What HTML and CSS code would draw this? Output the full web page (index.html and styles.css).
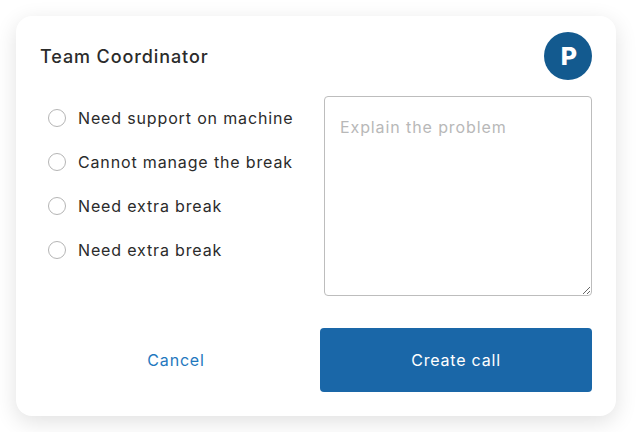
FILE: index.html
```html
<!DOCTYPE html>
<html lang="en">
<head>
    <meta charset="UTF-8">
    <meta name="viewport" content="width=device-width, initial-scale=1.0">
    <title>Team Coordinator</title>
    <link rel="stylesheet" href="styles.css">
</head>
<body>
    <div class="card">
        <div class="card-header">
            <h2>Team Coordinator</h2>
            <div class="avatar">P</div>
        </div>
        <div class="card-body">
            <div class="options">
                <label class="option"><input type="radio" name="reason"> Need support on machine</label>
                <label class="option"><input type="radio" name="reason"> Cannot manage the break</label>
                <label class="option"><input type="radio" name="reason"> Need extra break</label>
                <label class="option"><input type="radio" name="reason"> Need extra break</label>
            </div>
            <textarea class="problem" placeholder="Explain the problem"></textarea>
        </div>
        <div class="card-footer">
            <button class="btn-cancel">Cancel</button>
            <button class="btn-create">Create call</button>
        </div>
    </div>
</body>
</html>
```

FILE: styles.css
```css
body {
    margin: 0;
    padding: 16px;
    background: #fff;
    font-family: Inter, "Noto Sans", sans-serif;
    color: #2b2b2b;
}
.card {
    width: 600px;
    box-sizing: border-box;
    padding: 16px 24px 24px;
    background: #fff;
    border-radius: 16px;
    box-shadow: 0 6px 22px rgba(0, 0, 0, 0.12);
}
.card-header {
    display: flex;
    justify-content: space-between;
    align-items: center;
}
.card-header h2 {
    margin: 0;
    font-size: 18px;
    font-weight: 500;
    letter-spacing: 0.9px;
}
.avatar {
    width: 48px;
    height: 48px;
    border-radius: 50%;
    background: #135a8f;
    color: #fff;
    font-size: 25px;
    font-weight: 800;
    display: flex;
    align-items: center;
    justify-content: center;
    padding-left: 2px;
    box-sizing: border-box;
}
.card-body {
    display: grid;
    grid-template-columns: 1fr 268px;
    gap: 16px;
    margin-top: 16px;
}
.options {
    display: flex;
    flex-direction: column;
    padding-left: 8px;
}
.option {
    display: flex;
    align-items: center;
    gap: 12px;
    height: 44px;
    font-size: 16px;
    letter-spacing: 0.85px;
    color: #2b2b2b;
}
.option input {
    appearance: none;
    margin: 0;
    width: 18px;
    height: 18px;
    border: 1px solid #b5b5b5;
    border-radius: 50%;
    background: #fff;
}
.problem {
    height: 200px;
    box-sizing: border-box;
    padding: 20px 15px;
    border: 1px solid #bdbdbd;
    border-radius: 4px;
    font-family: inherit;
    font-size: 16px;
    letter-spacing: 0.9px;
    resize: vertical;
}
.problem::placeholder {
    color: #b8b8b8;
}
.card-footer {
    display: grid;
    grid-template-columns: 1fr 272px;
    gap: 8px;
    margin-top: 32px;
}
button {
    height: 64px;
    border: none;
    border-radius: 4px;
    font-family: inherit;
    font-size: 16px;
    letter-spacing: 0.8px;
    cursor: pointer;
}
.btn-cancel {
    background: none;
    color: #1f78be;
}
.btn-create {
    background: #1a67a8;
    color: #fff;
}
```
